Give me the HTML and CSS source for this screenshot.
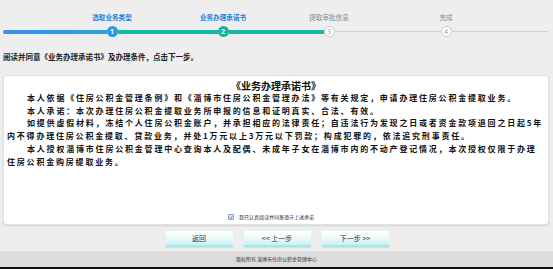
FILE: index.html
```html
<!DOCTYPE html>
<html lang="zh-CN">
<head>
<meta charset="utf-8">
<title>业务办理承诺书</title>
<link rel="stylesheet" href="styles.css">
</head>
<body>
<div class="page">
  <div class="steps">
    <div class="seg seg-a"></div>
    <div class="step done"><span class="label">选取业务类型</span><span class="dot">1</span></div>
    <div class="seg seg-b"></div>
    <div class="step active"><span class="label">业务办理承诺书</span><span class="dot">2</span></div>
    <div class="seg seg-c"></div>
    <div class="step todo"><span class="label">提取审批信息</span><span class="dot">3</span></div>
    <div class="seg seg-d"></div>
    <div class="step todo"><span class="label">完成</span><span class="dot">4</span></div>
    <div class="seg seg-e"></div>
  </div>

  <p class="intro">阅读并同意《业务办理承诺书》及办理条件，点击下一步。</p>

  <div class="card">
    <h1 class="title">《业务办理承诺书》</h1>
    <div class="body">
      <p class="para">本人依据《住房公积金管理条例》和《淄博市住房公积金管理办法》等有关规定，申请办理住房公积金提取业务。</p>
      <p class="para">本人承诺：本次办理住房公积金提取业务所申报的信息和证明真实、合法、有效。</p>
      <p class="para">如提供虚假材料，冻结个人住房公积金账户，并承担相应的法律责任；自违法行为发现之日或者资金款项退回之日起5年<br>内不得办理住房公积金提取、贷款业务，并处1万元以上3万元以下罚款；构成犯罪的，依法追究刑事责任。</p>
      <p class="para">本人授权淄博市住房公积金管理中心查询本人及配偶、未成年子女在淄博市内的不动产登记情况，本次授权仅限于办理<br>住房公积金购房提取业务。</p>
    </div>
    <label class="agree"><span class="check"><svg viewBox="0 0 6 6" width="6" height="6"><path d="M1.2 3.1 L2.5 4.4 L4.8 1.6" fill="none" stroke="#2f4f7f" stroke-width="1.1"/></svg></span><span class="agree-text">我已认真阅读并同意遵守上述承诺</span></label>
  </div>

  <div class="actions">
    <button class="btn">返回</button>
    <button class="btn">&lt;&lt; 上一步</button>
    <button class="btn">下一步 &gt;&gt;</button>
  </div>

  <div class="footer">版权所有 淄博市住房公积金管理中心</div>
</div>
</body>
</html>
```

FILE: styles.css
```css
* { box-sizing: border-box; }
html, body { margin: 0; padding: 0; }
body {
  background: #eeeeee;
  font-family: "Noto Sans CJK SC", "Noto Sans", sans-serif;
  color: #222;
  width: 553px;
  height: 269px;
  overflow: hidden;
}
.page {
  height: 269px;
  display: flex;
  flex-direction: column;
}

/* progress steps */
.steps {
  display: flex;
  align-items: flex-end;
  padding: 13px 5px 0 3px;
  height: 37px;
}
.seg { flex: none; }
.seg-a {
  width: 103.5px;
  height: 4px;
  margin-bottom: 3.5px;
  border-radius: 2px 0 0 2px;
  background: linear-gradient(to right, #3b8df0, #2aa3dc);
}
.seg-b, .seg-c {
  height: 4px;
  margin-bottom: 3.5px;
  background: #17b9a2;
}
.seg-b { width: 100px; }
.seg-c { width: 95px; }
.seg-d, .seg-e {
  height: 1px;
  margin-bottom: 5px;
  background: #cfcfcf;
}
.seg-d { width: 106px; }
.seg-e { flex: 1; }

.step {
  flex: none;
  width: 11px;
  display: flex;
  flex-direction: column;
  align-items: center;
  gap: 5px;
}
.label {
  white-space: nowrap;
  font-size: 6.6px;
  line-height: 8px;
  height: 8px;
}
.dot {
  width: 11px;
  height: 11px;
  border-radius: 50%;
  display: flex;
  align-items: center;
  justify-content: center;
  font-family: "Open Sans", "Liberation Sans", sans-serif;
  font-weight: 700;
  font-size: 7px;
  line-height: 1;
}
.done .label, .active .label { color: #2e7fd6; font-weight: 700; }
.done .dot { background: #2b99e2; color: #fff; }
.active .dot { background: #14b3a0; color: #fff; }
.todo .label { color: #8a8a8a; }
.todo .dot {
  background: #fff;
  border: 1px solid #c8c8c8;
  color: #9a9a9a;
  font-weight: 400;
}

/* intro */
.intro {
  margin: 0;
  padding: 15px 3px 0;
  font-size: 7.5px;
  line-height: 10px;
  font-weight: 700;
  color: #222;
}

/* card */
.card {
  margin: 13px 4px 0 3px;
  height: 150px;
  background: #fff;
  border: 1px solid #e2e2e2;
  border-radius: 4px;
  box-shadow: 0 1px 2px rgba(0,0,0,0.12);
  display: flex;
  flex-direction: column;
  padding: 4px 7px 3px 3px;
}
.title {
  margin: 0;
  text-align: center;
  font-size: 10px;
  line-height: 12px;
  font-weight: 700;
  color: #111;
  padding-left: 4px;
}
.body { margin-top: 0; }
.para {
  margin: 0;
  text-indent: 20px;
  font-size: 8px;
  line-height: 12.7px;
  letter-spacing: 1.8px;
  font-weight: 700;
  color: #111;
  white-space: nowrap;
}
.agree {
  margin-top: auto;
  display: flex;
  align-items: center;
  justify-content: center;
  gap: 5px;
  padding-right: 6px;
}
.check {
  width: 6px;
  height: 6px;
  border: 1px solid #8aa0c0;
  background: #dfe6f2;
  display: flex;
  align-items: center;
  justify-content: center;
  border-radius: 1px;
}
.check svg { display: block; width: 5px; height: 5px; }
.agree-text {
  font-size: 5px;
  line-height: 8px;
  color: #333;
}

/* buttons */
.actions {
  display: flex;
  justify-content: center;
  gap: 9px;
  margin-top: 5px;
  padding-left: 1px;
}
.btn {
  width: 69px;
  height: 17px;
  padding: 0;
  border: 1px solid #e4f4f4;
  border-bottom: 2px solid #a6e6e6;
  border-radius: 2px;
  background: linear-gradient(to bottom, #ffffff 0%, #f2fbfb 40%, #c9f1f1 100%);
  font-family: "Noto Sans CJK SC", sans-serif;
  font-size: 7px;
  color: #333;
  box-shadow: 0 1px 1px rgba(0,0,0,0.08);
}

/* footer */
.footer {
  margin-top: auto;
  height: 18px;
  background: #dcdcdc;
  border-bottom: 2px solid #111;
  text-align: center;
  font-size: 5px;
  line-height: 16px;
  color: #333;
}
```
